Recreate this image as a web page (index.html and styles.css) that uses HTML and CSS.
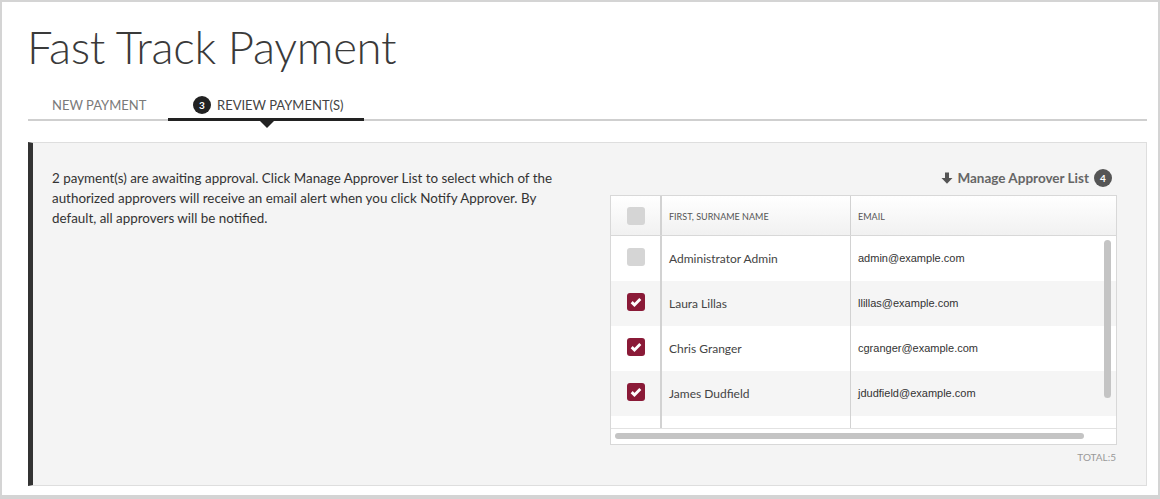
FILE: index.html
```html
<!DOCTYPE html>
<html>
<head>
<meta charset="utf-8">
<link rel="stylesheet" href="styles.css">
</head>
<body>
<div class="frame">
  <h1 class="title">Fast Track Payment</h1>
  <div class="tabs">
    <div class="tab">NEW PAYMENT</div>
    <div class="tab active"><span class="tab-badge">3</span>REVIEW PAYMENT(S)<span class="caret"></span></div>
  </div>
  <div class="panel">
    <p class="msg">2 payment(s) are awaiting approval. Click Manage Approver List to select which of the authorized approvers will receive an email alert when you click Notify Approver. By default, all approvers will be notified.</p>
    <div class="approvers">
      <div class="manage">
        <svg class="arrow" viewBox="0 0 12 12" width="12" height="12"><path d="M4 0.5h4v5.5h3.5L6 11.8 0.5 6H4z" fill="#555"/></svg>
        <span>Manage Approver List</span>
        <span class="count">4</span>
      </div>
      <div class="grid">
        <div class="head">
          <div class="c-check"><span class="box"></span></div>
          <div class="c-name">FIRST, SURNAME NAME</div>
          <div class="c-email">EMAIL</div>
        </div>
        <div class="body">
          <div class="row">
            <div class="c-check"><span class="box"></span></div>
            <div class="c-name">Administrator Admin</div>
            <div class="c-email">admin@example.com</div>
          </div>
          <div class="row alt">
            <div class="c-check"><span class="box on"><svg viewBox="0 0 12 12" width="14" height="14"><path d="M2.3 6.1l2.4 2.4L9.7 3.5" fill="none" stroke="#fff" stroke-width="2.5"/></svg></span></div>
            <div class="c-name">Laura Lillas</div>
            <div class="c-email">llillas@example.com</div>
          </div>
          <div class="row">
            <div class="c-check"><span class="box on"><svg viewBox="0 0 12 12" width="14" height="14"><path d="M2.3 6.1l2.4 2.4L9.7 3.5" fill="none" stroke="#fff" stroke-width="2.5"/></svg></span></div>
            <div class="c-name">Chris Granger</div>
            <div class="c-email">cgranger@example.com</div>
          </div>
          <div class="row alt">
            <div class="c-check"><span class="box on"><svg viewBox="0 0 12 12" width="14" height="14"><path d="M2.3 6.1l2.4 2.4L9.7 3.5" fill="none" stroke="#fff" stroke-width="2.5"/></svg></span></div>
            <div class="c-name">James Dudfield</div>
            <div class="c-email">jdudfield@example.com</div>
          </div>
          <div class="row partial">
            <div class="c-check"></div>
            <div class="c-name"></div>
            <div class="c-email"></div>
          </div>
          <span class="vscroll"></span>
        </div>
        <div class="hscroll"><span class="hthumb"></span></div>
      </div>
      <div class="total">TOTAL:5</div>
    </div>
  </div>
</div>
</body>
</html>
```

FILE: styles.css
```css
* { box-sizing: border-box; }
html, body { margin: 0; padding: 0; background: #fff; }
body { font-family: Lato, "Open Sans", sans-serif; color: #333; }

.frame {
  width: 1160px;
  height: 499px;
  border: 2px solid #d4d4d4;
  border-bottom-width: 4px;
  padding: 18px 11px 0 26px;
  overflow: hidden;
}

.title {
  margin: 0 0 0 -1px;
  font-family: Lato, sans-serif;
  font-weight: 300;
  font-size: 45.5px;
  line-height: 54px;
  color: #3a3a3a;
  letter-spacing: -0.3px;
}

.tabs {
  display: flex;
  margin-top: 22px;
  border-bottom: 2px solid #cfcfcf;
  height: 25px;
}
.tab {
  position: relative;
  font-size: 13px;
  color: #7a7a7a;
  padding: 0 0 0 24px;
  width: 140px;
  line-height: 18px;
  white-space: nowrap;
}
.tab.active {
  width: 196px;
  padding-left: 25px;
  color: #444;
  border-bottom: 3px solid #222;
  margin-bottom: -2px;
  display: flex;
  align-items: flex-start;
}
.tab-badge {
  display: inline-block;
  width: 18px;
  height: 18px;
  border-radius: 50%;
  background: #222;
  color: #fff;
  font-size: 10px;
  font-weight: 700;
  text-align: center;
  line-height: 18px;
  margin-right: 6px;
}
.caret {
  position: absolute;
  left: 92px;
  bottom: -10px;
  width: 0;
  height: 0;
  border-left: 7px solid transparent;
  border-right: 7px solid transparent;
  border-top: 7px solid #222;
}

.panel {
  margin-top: 21px;
  height: 344px;
  background: #f4f4f4;
  border: 1px solid #dedede;
  border-left: 5px solid #333;
  display: flex;
  justify-content: space-between;
  padding: 25px 29px 0 19px;
}
.msg {
  margin: 0;
  width: 515px;
  font-size: 13.4px;
  line-height: 20px;
  color: #333;
}

.approvers {
  width: 507px;
  margin-top: 0;
}
.manage {
  display: flex;
  justify-content: flex-end;
  align-items: center;
  font-size: 13.5px;
  font-weight: 700;
  color: #666;
  height: 20px;
  padding-right: 5px;
}
.manage .arrow { margin-right: 4px; }
.count {
  display: inline-block;
  width: 18px;
  height: 18px;
  border-radius: 50%;
  background: #555;
  color: #fff;
  font-size: 10px;
  text-align: center;
  line-height: 18px;
  margin-left: 5px;
}

.grid {
  margin-top: 7px;
  border: 1px solid #d8d8d8;
  background: #fff;
}
.head, .row {
  display: flex;
}
.head {
  height: 40px;
  background: linear-gradient(#fff, #f1f1f1);
  border-bottom: 1px solid #d8d8d8;
  font-size: 9px;
  color: #555;
}
.c-check {
  width: 51px;
  display: flex;
  align-items: center;
  justify-content: center;
  border-right: 2px solid #d2d2d2;
}
.c-name {
  width: 189px;
  padding-left: 7px;
  display: flex;
  align-items: center;
  border-right: 1px solid #d2d2d2;
}
.c-email {
  flex: 1;
  padding-left: 7px;
  display: flex;
  align-items: center;
}
.head .c-name, .head .c-email { padding-top: 1px; }

.body {
  position: relative;
  height: 192px;
  overflow: hidden;
}
.row {
  height: 45px;
  font-size: 12px;
  color: #444;
}
.row .c-email {
  font-family: "Liberation Sans", Arial, sans-serif;
  font-size: 11px;
  color: #333;
}
.row .c-name { padding-bottom: 1px; }
.row .c-email { padding-bottom: 1px; }
.row.alt { background: #f5f5f5; }
.row.partial { height: 12px; }
.row .c-check { align-items: flex-start; padding-top: 12px; }

.box {
  width: 18px;
  height: 18px;
  border-radius: 3px;
  background: #d5d5d5;
  display: flex;
  align-items: center;
  justify-content: center;
}
.box.on { background: #8a1a37; }

.vscroll {
  position: absolute;
  right: 5px;
  top: 4px;
  width: 7px;
  height: 158px;
  border-radius: 4px;
  background: #c4c4c4;
}

.hscroll {
  height: 16px;
  border-top: 1px solid #e2e2e2;
  background: #fff;
  padding: 4px 0 0 4px;
}
.hthumb {
  display: block;
  width: 469px;
  height: 6px;
  border-radius: 3px;
  background: #c4c4c4;
}

.total {
  text-align: right;
  font-size: 10px;
  color: #999;
  margin-top: 6px;
  padding-right: 1px;
}
```
